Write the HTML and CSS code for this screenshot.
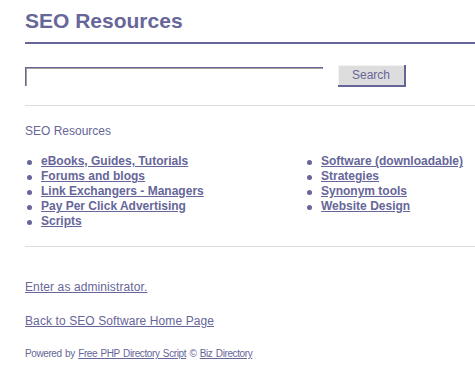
FILE: index.html
```html
<!DOCTYPE html>
<html lang="en">

<head>
    <meta charset="UTF-8">
    <title>SEO Resources</title>
    <link rel="stylesheet" href="styles.css">
</head>

<body>
    <div class="page">
        <h1 class="title">SEO Resources</h1>

        <form class="search">
            <input type="text" class="search-input" aria-label="Search">
            <button type="button" class="search-btn">Search</button>
        </form>

        <div class="section">
            <div class="path">SEO Resources</div>
            <div class="cats">
                <ul class="cat-list">
                    <li><a href="#">eBooks, Guides, Tutorials</a></li>
                    <li><a href="#">Forums and blogs</a></li>
                    <li><a href="#">Link Exchangers - Managers</a></li>
                    <li><a href="#">Pay Per Click Advertising</a></li>
                    <li><a href="#">Scripts</a></li>
                </ul>
                <ul class="cat-list">
                    <li><a href="#">Software (downloadable)</a></li>
                    <li><a href="#">Strategies</a></li>
                    <li><a href="#">Synonym tools</a></li>
                    <li><a href="#">Website Design</a></li>
                </ul>
            </div>
        </div>

        <div class="footer">
            <a href="#" class="foot-link">Enter as administrator.</a>
            <a href="#" class="foot-link">Back to SEO Software Home Page</a>
            <div class="powered">Powered by <a href="#">Free PHP Directory Script</a> &copy; <a href="#">Biz Directory</a></div>
        </div>
    </div>
</body>

</html>
```

FILE: styles.css
```css
:root {
    --purple: #666699;
    --grey-line: #dddddd;
}

body {
    margin: 0;
    background: #ffffff;
    font-family: 'Liberation Sans', Arial, sans-serif;
    color: var(--purple);
}

a {
    color: var(--purple);
}

.page {
    padding: 9px 0 0 25px;
}

.title {
    margin: 0;
    font-size: 21px;
    font-weight: bold;
    line-height: 24px;
    padding-bottom: 9px;
    border-bottom: 2px solid var(--purple);
}

.search {
    display: flex;
    align-items: center;
    gap: 15px;
    margin: 0;
    padding: 21px 0 18px;
    border-bottom: 1px solid var(--grey-line);
}

.search-input {
    width: 298px;
    height: 19px;
    box-sizing: border-box;
    margin: 0;
    padding: 0;
    border: 0;
    border-top: 1px solid var(--purple);
    border-left: 1px solid var(--purple);
    box-shadow: inset 1px 1px 0 #a0a0a0;
    background: #ffffff;
}

.search-btn {
    width: 68px;
    height: 22px;
    margin: 0;
    padding: 0;
    font-family: 'Liberation Sans', Arial, sans-serif;
    font-size: 12px;
    color: var(--purple);
    background: #dddddd;
    border: 0;
    border-right: 2px solid var(--purple);
    border-bottom: 2px solid var(--purple);
    box-shadow: inset 1px 1px 0 #f4f4f4;
}

.section {
    padding: 18px 0 17px;
    border-bottom: 1px solid var(--grey-line);
}

.path {
    font-size: 12px;
    line-height: 15px;
    margin-bottom: 15px;
}

.cats {
    display: grid;
    grid-template-columns: 280px 1fr;
}

.cat-list {
    margin: 0;
    padding: 0;
    list-style: none;
    font-size: 12px;
    font-weight: bold;
    line-height: 15px;
}

.cat-list li {
    display: flex;
    align-items: center;
}

.cat-list li::before {
    content: "";
    width: 5px;
    height: 5px;
    margin: 1px 9px 0 2px;
    border-radius: 50%;
    background: var(--purple);
}

.footer {
    display: flex;
    flex-direction: column;
    align-items: flex-start;
    padding-top: 32px;
}

.foot-link {
    font-size: 12px;
    line-height: 17px;
    letter-spacing: 0.1px;
    margin-bottom: 17px;
}

.powered {
    font-size: 10px;
    line-height: 13px;
    letter-spacing: -0.4px;
    word-spacing: 1px;
}
```
